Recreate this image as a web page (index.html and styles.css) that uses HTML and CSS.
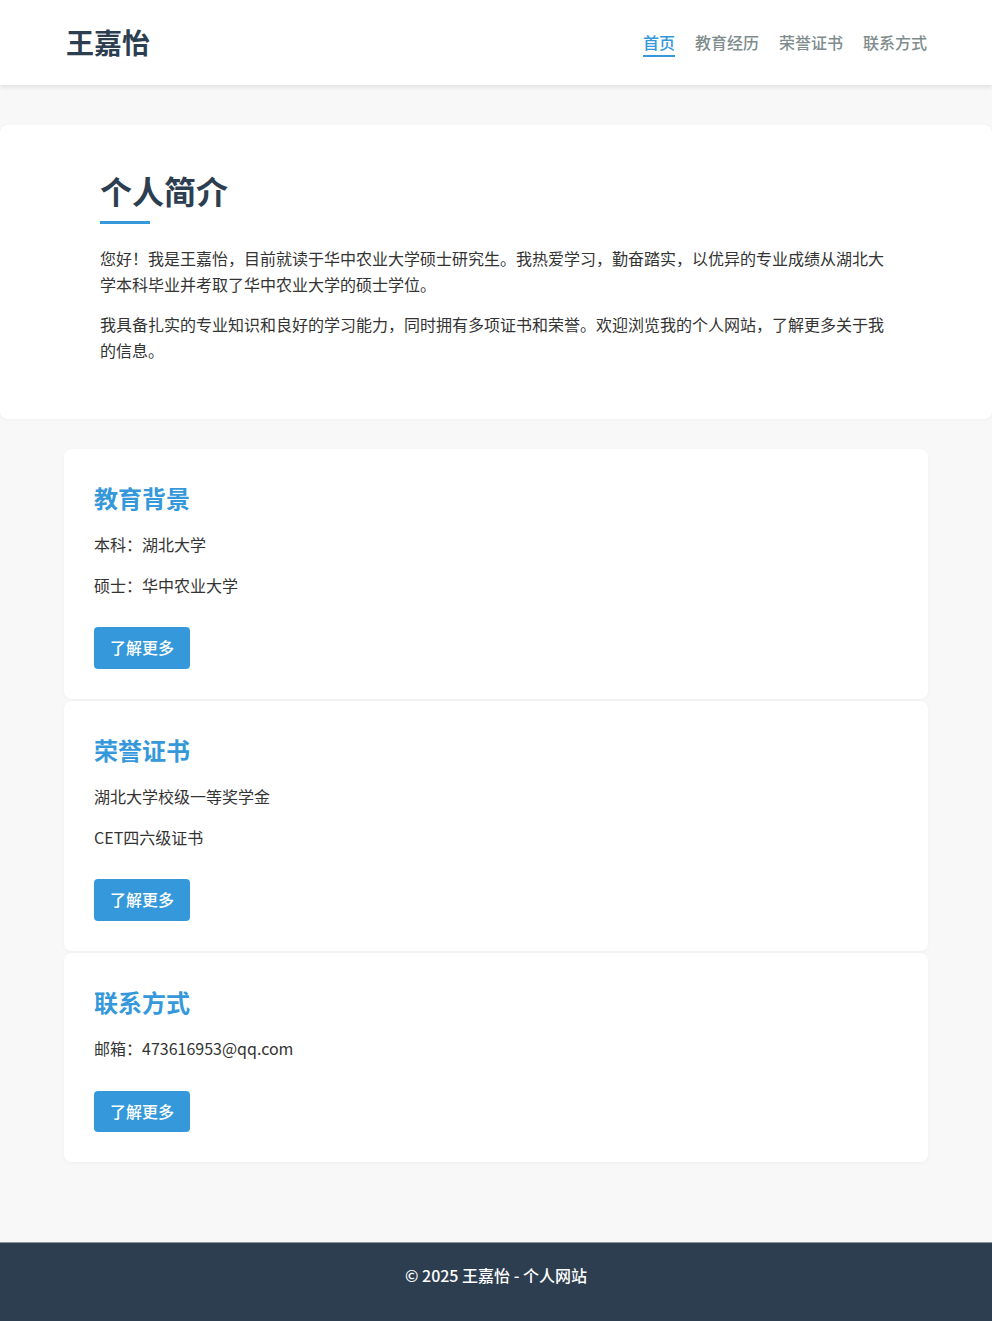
FILE: index.html
```html
<!DOCTYPE html>
<html lang="zh-CN">
<head>
  <meta charset="UTF-8">
  <title>王嘉怡 - 个人网站</title>
  <link rel="stylesheet" href="styles.css">
</head>
<body>
  <header class="site-header">
    <div class="header-inner">
      <div class="logo">王嘉怡</div>
      <nav class="nav">
        <a href="#" class="nav-link active">首页</a>
        <a href="#" class="nav-link">教育经历</a>
        <a href="#" class="nav-link">荣誉证书</a>
        <a href="#" class="nav-link">联系方式</a>
      </nav>
    </div>
  </header>

  <section class="intro">
    <h2 class="intro-title">个人简介</h2>
    <p>您好！我是王嘉怡，目前就读于华中农业大学硕士研究生。我热爱学习，勤奋踏实，以优异的专业成绩从湖北大学本科毕业并考取了华中农业大学的硕士学位。</p>
    <p>我具备扎实的专业知识和良好的学习能力，同时拥有多项证书和荣誉。欢迎浏览我的个人网站，了解更多关于我的信息。</p>
  </section>

  <main class="cards">
    <div class="card">
      <h3>教育背景</h3>
      <p>本科：湖北大学</p>
      <p>硕士：华中农业大学</p>
      <a href="#" class="btn">了解更多</a>
    </div>
    <div class="card">
      <h3>荣誉证书</h3>
      <p>湖北大学校级一等奖学金</p>
      <p>CET四六级证书</p>
      <a href="#" class="btn">了解更多</a>
    </div>
    <div class="card">
      <h3>联系方式</h3>
      <p>邮箱：473616953@qq.com</p>
      <a href="#" class="btn">了解更多</a>
    </div>
  </main>

  <footer class="site-footer">
    <p>© 2025 王嘉怡 - 个人网站</p>
  </footer>
</body>
</html>
```

FILE: styles.css
```css
* {
  box-sizing: border-box;
}

body {
  margin: 0;
  background-color: #f8f8f8;
  color: #333;
  font-family: "Noto Sans CJK SC", "Noto Sans", sans-serif;
  font-size: 16px;
  line-height: 1.6;
}

.site-header {
  background-color: #fff;
  box-shadow: 0 2px 5px rgba(0, 0, 0, 0.1);
}

.header-inner {
  width: 864px;
  margin: 0 auto;
  height: 85px;
  display: flex;
  align-items: center;
  justify-content: space-between;
}

.logo {
  font-size: 28px;
  font-weight: bold;
  color: #2c3e50;
  padding-left: 2px;
}

.nav {
  display: flex;
  gap: 20px;
  padding-right: 1px;
}

.nav-link {
  color: #7f8c8d;
  text-decoration: none;
  font-weight: 500;
  border-bottom: 2px solid transparent;
  margin-top: 2px;
}

.nav-link.active {
  color: #3498db;
  border-bottom-color: #3498db;
}

.intro {
  background-color: #fff;
  margin-top: 40px;
  padding: 40px 100px 40px;
  border-radius: 8px;
  box-shadow: 0 1px 4px rgba(0, 0, 0, 0.04);
}

.intro-title {
  margin: 0;
  font-size: 32px;
  line-height: 1.6;
  color: #2c3e50;
}

.intro-title::after {
  content: "";
  display: block;
  width: 50px;
  height: 3px;
  margin-top: 5px;
  margin-bottom: 22px;
  background-color: #3498db;
}

.intro p {
  margin: 0 0 15px;
}

.cards {
  width: 864px;
  margin: 30px auto 80px;
  display: flex;
  flex-direction: column;
  gap: 2px;
}

.card {
  background-color: #fff;
  border-radius: 8px;
  padding: 30px;
  box-shadow: 0 1px 4px rgba(0, 0, 0, 0.04);
}

.card h3 {
  margin: 0 0 15px;
  font-size: 24px;
  line-height: 1.6;
  color: #3498db;
}

.card p {
  margin: 0 0 15px;
}

.btn {
  display: inline-block;
  vertical-align: top;
  margin-top: 14px;
  padding: 8px 16px;
  background-color: #3498db;
  color: #fff;
  text-decoration: none;
  border-radius: 4px;
  font-weight: 500;
}

.site-footer {
  background-color: #2c3e50;
  color: #fff;
  text-align: center;
  padding: 20px 0 35px;
  border-top: 1px solid #8795a1;
}

.site-footer p {
  margin: 0;
  font-weight: 500;
}
```
